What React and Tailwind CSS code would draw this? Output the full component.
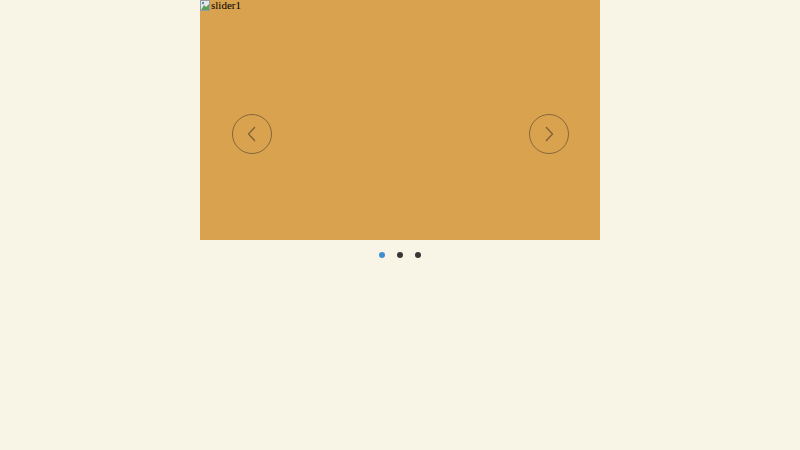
import React, { useState } from 'react';

const SLIDES = ['slider1', 'slider2', 'slider3'];

function Arrow({ dir, onClick, className }) {
  return (
    <button
      onClick={onClick}
      className={`absolute top-[114px] w-10 h-10 rounded-full border-[1.5px] border-[#86663a] flex items-center justify-center ${className}`}
    >
      <svg width="14" height="18" viewBox="0 0 14 18" fill="none" stroke="#7f6036" strokeWidth="1.3">
        {dir === 'left' ? <path d="M10 2 L3.5 9 L10 16" /> : <path d="M4 2 L10.5 9 L4 16" />}
      </svg>
    </button>
  );
}

export default function App() {
  const [index, setIndex] = useState(0);
  const prev = () => setIndex((index + SLIDES.length - 1) % SLIDES.length);
  const next = () => setIndex((index + 1) % SLIDES.length);

  return (
    <div className="min-h-screen bg-[#f8f5e7]">
      <div className="mx-auto w-[400px]">
        <div className="relative h-[240px] bg-[#d9a24f]">
          {/* broken image alt text */}
          <div className="flex items-start text-[11px] leading-[11px] text-black" style={{ fontFamily: '"Liberation Serif", serif' }}>
            <svg width="10" height="11" viewBox="0 0 10 11" className="mr-[1px]">
              <rect x="0.5" y="0.5" width="9" height="10" fill="#e8e8e8" stroke="#9a9a9a" />
              <path d="M1 10 L4 5 L6 7 L9 4 L9 10 Z" fill="#5aa05a" />
              <circle cx="3" cy="3" r="1.2" fill="#4a8ad0" />
            </svg>
            <span>{SLIDES[index]}</span>
          </div>
          <Arrow dir="left" onClick={prev} className="left-[32px]" />
          <Arrow dir="right" onClick={next} className="right-[31px]" />
        </div>
        <div className="flex justify-center gap-[12px] pt-[12px]">
          {SLIDES.map((s, i) => (
            <button
              key={s}
              onClick={() => setIndex(i)}
              className={`w-[6px] h-[6px] rounded-full ${i === index ? 'bg-[#3d8fd1]' : 'bg-[#3a3633]'}`}
            />
          ))}
        </div>
      </div>
    </div>
  );
}
